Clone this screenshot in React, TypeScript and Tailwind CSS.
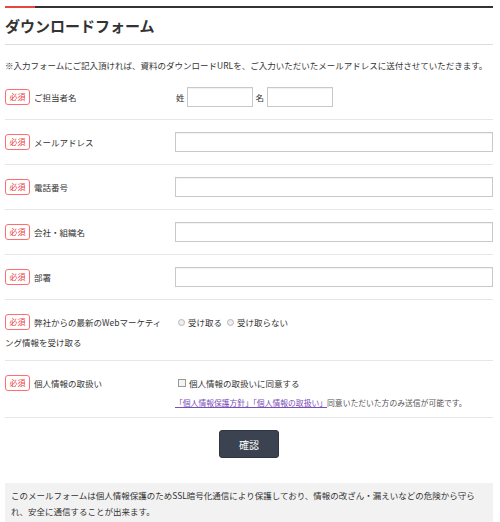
import React from "react";

const FONT = { fontFamily: '"Noto Sans CJK JP", "Noto Sans", sans-serif' };

function Required() {
  return (
    <span className="mt-[2px] mr-[4px] inline-block h-[16px] w-[25px] rounded-[3px] border border-[#ff6e6e] text-center align-top text-[8px] leading-[14px] text-[#e8403f]">
      必須
    </span>
  );
}

function Field() {
  return (
    <input
      type="text"
      className="block h-[20px] w-full border border-[#c9c9c9] bg-white shadow-[inset_0_1px_1px_rgba(0,0,0,0.06)] outline-none"
    />
  );
}

function Row({
  label,
  children,
  className = "items-center py-3",
}: {
  label: string;
  children: React.ReactNode;
  className?: string;
}) {
  return (
    <div className={`flex border-b border-[#e6e6e6] ${className}`}>
      <div className="w-[170px] shrink-0 pr-[8px] text-[8.5px] leading-[20px]">
        <Required />
        {label}
      </div>
      <div className="min-w-0 flex-1">{children}</div>
    </div>
  );
}

function Radio({ label }: { label: string }) {
  return (
    <label className="mr-[5px] inline-flex items-center gap-[3px]">
      <span className="inline-block h-[7px] w-[7px] rounded-full border border-[#b5b5b5] bg-[#eeeeee]" />
      {label}
    </label>
  );
}

export default function App() {
  return (
    <div className="min-h-[522px] bg-white text-[#333]" style={FONT}>
      <div className="ml-[5px] w-[488px] pt-[6px]">
        <div className="flex h-[2px] bg-[#333]">
          <div className="w-[30px] bg-[#e8453c]" />
        </div>
        <h2 className="mt-[9px] border-b border-[#dddddd] pb-[9px] text-[15px] leading-[18px] font-bold">
          ダウンロードフォーム
        </h2>
        <p className="mt-[14px] mb-[4px] text-[8.5px] leading-[12px] whitespace-nowrap">
          ※入力フォームにご記入頂ければ、資料のダウンロードURLを、ご入力いただいたメールアドレスに送付させていただきます。
        </p>

        <Row label="ご担当者名">
          <div className="flex items-center text-[8.5px]">
            <span className="mr-[2px] ml-[1px]">姓</span>
            <div className="w-[66px]">
              <Field />
            </div>
            <span className="mx-[3px]">名</span>
            <div className="w-[66px]">
              <Field />
            </div>
          </div>
        </Row>
        <Row label="メールアドレス">
          <Field />
        </Row>
        <Row label="電話番号">
          <Field />
        </Row>
        <Row label="会社・組織名">
          <Field />
        </Row>
        <Row label="部署">
          <Field />
        </Row>
        <Row
          label="弊社からの最新のWebマーケティング情報を受け取る"
          className="items-start pt-3 pb-[8px]"
        >
          <div className="flex items-center pl-[3px] text-[8.5px] leading-[20px]">
            <Radio label="受け取る" />
            <Radio label="受け取らない" />
          </div>
        </Row>
        <Row label="個人情報の取扱い" className="items-start pt-3 pb-[6px]">
          <label className="flex items-center gap-[3px] pl-[3px] text-[8.5px] leading-[20px]">
            <span className="inline-block h-[8px] w-[8px] border border-[#9a9a9a] bg-[#f4f4f4]" />
            個人情報の取扱いに同意する
          </label>
          <p className="mt-[2px] text-[7.8px] leading-[16px] whitespace-nowrap text-[#555]">
            <a href="#" className="text-[#7a4fb5] underline">
              「個人情報保護方針」「個人情報の取扱い」
            </a>
            同意いただいた方のみ送信が可能です。
          </p>
        </Row>

        <button
          type="button"
          className="mx-auto mt-[12px] block h-[28px] w-[60px] rounded-[3px] border border-[#2f3540] bg-[#3c4350] text-[10px] text-white"
        >
          確認
        </button>

        <div className="mt-[25px] bg-[#f2f2f2] pt-[4px] pr-[10px] pb-[8px] pl-[6px] text-[8.5px] leading-[16px]">
          このメールフォームは個人情報保護のためSSL暗号化通信により保護しており、情報の改ざん・漏えいなどの危険から守られ、安全に通信することが出来ます。
        </div>
      </div>
    </div>
  );
}
